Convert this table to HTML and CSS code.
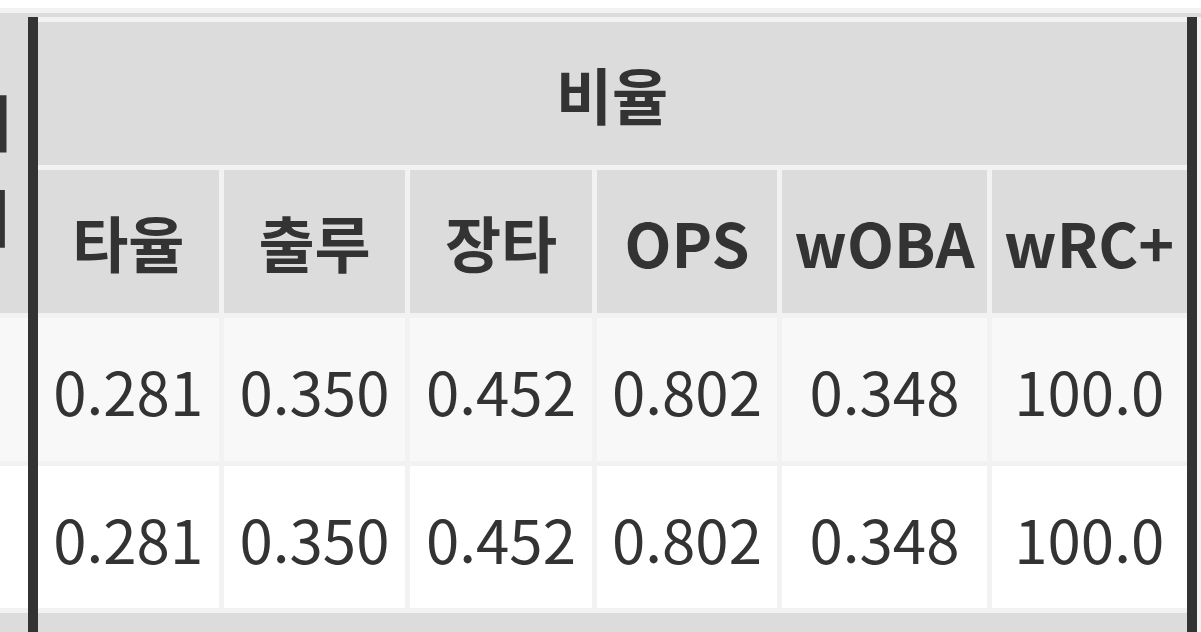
FILE: index.html
```html
<!DOCTYPE html>
<html lang="ko">
<head>
<meta charset="utf-8">
<title>비율</title>
<link rel="stylesheet" href="styles.css">
</head>
<body>
<div class="viewport">
  <div class="top-band"></div>
  <table class="stats">
    <colgroup>
      <col class="c-label">
      <col class="c1">
      <col class="c2">
      <col class="c3">
      <col class="c4">
      <col class="c5">
      <col class="c6">
      <col class="c-extra">
    </colgroup>
    <thead>
      <tr class="h1">
        <th class="label head-label" rowspan="2">대<br>비</th>
        <th class="group first last" colspan="6">비율</th>
        <th class="extra" rowspan="2">기타</th>
      </tr>
      <tr class="h2">
        <th class="first">타율</th>
        <th>출루</th>
        <th>장타</th>
        <th>OPS</th>
        <th>wOBA</th>
        <th class="last">wRC+</th>
      </tr>
    </thead>
    <tbody>
      <tr class="odd">
        <td class="label">리그 평균</td>
        <td class="first">0.281</td>
        <td>0.350</td>
        <td>0.452</td>
        <td>0.802</td>
        <td>0.348</td>
        <td class="last">100.0</td>
        <td class="extra"></td>
      </tr>
      <tr class="even">
        <td class="label">선수 평균</td>
        <td class="first">0.281</td>
        <td>0.350</td>
        <td>0.452</td>
        <td>0.802</td>
        <td>0.348</td>
        <td class="last">100.0</td>
        <td class="extra"></td>
      </tr>
    </tbody>
    <tbody>
      <tr class="section">
        <th class="label">구분</th>
        <th class="group first last" colspan="6">누적</th>
        <th class="extra">기타</th>
      </tr>
    </tbody>
  </table>
</div>
</body>
</html>
```

FILE: styles.css
```css
html, body {
  margin: 0;
  padding: 0;
  background: #ffffff;
}

.viewport {
  width: 1201px;
  height: 632px;
  overflow: hidden;
  box-sizing: border-box;
  padding-top: 8px;
  font-family: "Noto Sans CJK KR", "Noto Sans", sans-serif;
  color: #333333;
}

.top-band {
  height: 4px;
  background: #dcdcdc;
  border-top: 5px solid #f2f2f2;
}

.stats {
  border-collapse: collapse;
  table-layout: fixed;
  margin-left: -370px;
  width: 1759px;
}

.c-label { width: 400px; }
.c1 { width: 189px; }
.c2 { width: 186px; }
.c3 { width: 187px; }
.c4 { width: 185px; }
.c5 { width: 210px; }
.c6 { width: 202px; }
.c-extra { width: 200px; }

.stats th,
.stats td {
  border: 5px solid #f2f2f2;
  padding: 0;
  text-align: center;
  vertical-align: middle;
  white-space: nowrap;
  overflow: hidden;
}

.stats th {
  font-size: 61px;
  font-weight: 700;
  background: #dcdcdc;
}

.stats td {
  font-size: 60px;
  font-weight: 400;
}

.h1 { height: 148px; }
.h2 { height: 148px; }
.odd { height: 148px; }
.even { height: 147px; }
.section { height: 148px; }

.odd td { background: #f8f8f8; }
.even td { background: #ffffff; }

.stats .label {
  border-right: 10px solid #333333;
}

.stats td.label {
  text-align: left;
  padding-left: 20px;
}

.stats .head-label {
  border-top-color: #dcdcdc;
  text-align: right;
  padding-right: 16px;
  line-height: 95px;
}

.stats .first {
  border-left: 10px solid #333333;
}

.stats .last {
  border-right: 10px solid #333333;
}

.stats .extra {
  border-left: 10px solid #333333;
  box-shadow: inset 5px 0 0 #f2f2f2;
}
```
